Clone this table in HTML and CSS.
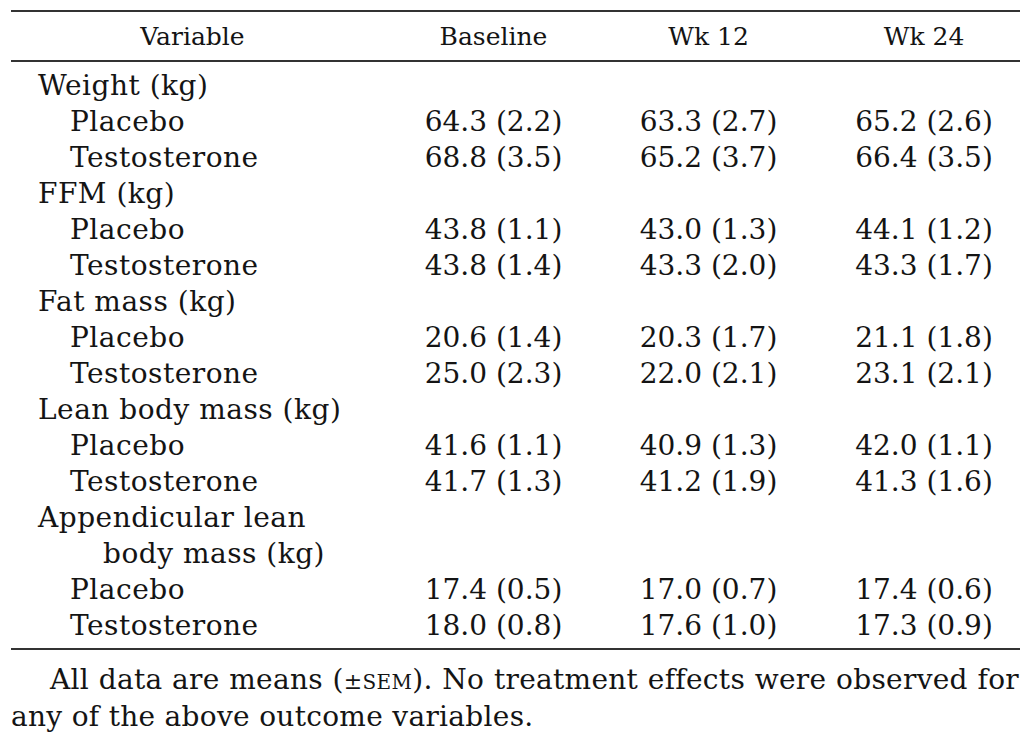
FILE: index.html
```html
<!DOCTYPE html>
<html>
<head>
<meta charset="utf-8">
<link rel="stylesheet" href="styles.css">
</head>
<body>
<div class="page">
<table class="data">
<thead>
<tr><th class="var">Variable</th><th>Baseline</th><th>Wk 12</th><th class="last">Wk 24</th></tr>
</thead>
<tbody>
<tr class="first"><td class="cat">Weight (kg)</td><td></td><td></td><td class="last"></td></tr>
<tr><td class="sub">Placebo</td><td>64.3 (2.2)</td><td>63.3 (2.7)</td><td class="last">65.2 (2.6)</td></tr>
<tr><td class="sub">Testosterone</td><td>68.8 (3.5)</td><td>65.2 (3.7)</td><td class="last">66.4 (3.5)</td></tr>
<tr><td class="cat">FFM (kg)</td><td></td><td></td><td class="last"></td></tr>
<tr><td class="sub">Placebo</td><td>43.8 (1.1)</td><td>43.0 (1.3)</td><td class="last">44.1 (1.2)</td></tr>
<tr><td class="sub">Testosterone</td><td>43.8 (1.4)</td><td>43.3 (2.0)</td><td class="last">43.3 (1.7)</td></tr>
<tr><td class="cat">Fat mass (kg)</td><td></td><td></td><td class="last"></td></tr>
<tr><td class="sub">Placebo</td><td>20.6 (1.4)</td><td>20.3 (1.7)</td><td class="last">21.1 (1.8)</td></tr>
<tr><td class="sub">Testosterone</td><td>25.0 (2.3)</td><td>22.0 (2.1)</td><td class="last">23.1 (2.1)</td></tr>
<tr><td class="cat">Lean body mass (kg)</td><td></td><td></td><td class="last"></td></tr>
<tr><td class="sub">Placebo</td><td>41.6 (1.1)</td><td>40.9 (1.3)</td><td class="last">42.0 (1.1)</td></tr>
<tr><td class="sub">Testosterone</td><td>41.7 (1.3)</td><td>41.2 (1.9)</td><td class="last">41.3 (1.6)</td></tr>
<tr><td class="cat">Appendicular lean</td><td></td><td></td><td class="last"></td></tr>
<tr><td class="cont">body mass (kg)</td><td></td><td></td><td class="last"></td></tr>
<tr><td class="sub">Placebo</td><td>17.4 (0.5)</td><td>17.0 (0.7)</td><td class="last">17.4 (0.6)</td></tr>
<tr class="end"><td class="sub">Testosterone</td><td>18.0 (0.8)</td><td>17.6 (1.0)</td><td class="last">17.3 (0.9)</td></tr>
</tbody>
</table>
<p class="note">All data are means (<span class="pm">±</span><span class="sc">sem</span>). No treatment effects were observed for any of the above outcome variables.</p>
</div>
</body>
</html>
```
FILE: styles.css
```css
html, body {
  margin: 0;
  padding: 0;
  background: #ffffff;
}
.page {
  padding: 10px 0 0 11px;
  width: 1008px;
  font-family: "DejaVu Serif", "Liberation Serif", serif;
  color: #141414;
}
.data {
  width: 1008px;
  border-collapse: collapse;
  border-top: 2px solid #333;
  border-bottom: 2px solid #333;
  table-layout: fixed;
}
.data th {
  font-weight: normal;
  font-size: 25px;
  height: 48px;
  padding: 0;
  text-align: center;
  width: 215px;
  border-bottom: 2px solid #333;
  white-space: nowrap;
}
.data th.var {
  width: 363px;
  padding-right: 12px;
}
.data th.last {
  width: 192px;
  padding-left: 12px;
}
.data td {
  font-size: 28px;
  height: 36px;
  padding: 0;
  text-align: center;
  white-space: nowrap;
  line-height: 36px;
}
.data td.last {
  padding-left: 12px;
}
.data td.cat,
.data td.sub,
.data td.cont {
  text-align: left;
  letter-spacing: 0.5px;
}
.data td.cat { padding-left: 27px; }
.data td.sub { padding-left: 59px; }
.data td.cont { padding-left: 92px; }
.data tr.first td { padding-top: 6px; height: 36px; }
.data tr.end td { height: 40px; vertical-align: top; }
.note {
  margin: 12px 0 0 0;
  font-size: 28px;
  line-height: 35px;
  letter-spacing: 0.3px;
  text-indent: 39px;
  text-align: justify;
  width: 1008px;
}
.pm {
  font-size: 22px;
}
.sc {
  font-variant: small-caps;
}
```
